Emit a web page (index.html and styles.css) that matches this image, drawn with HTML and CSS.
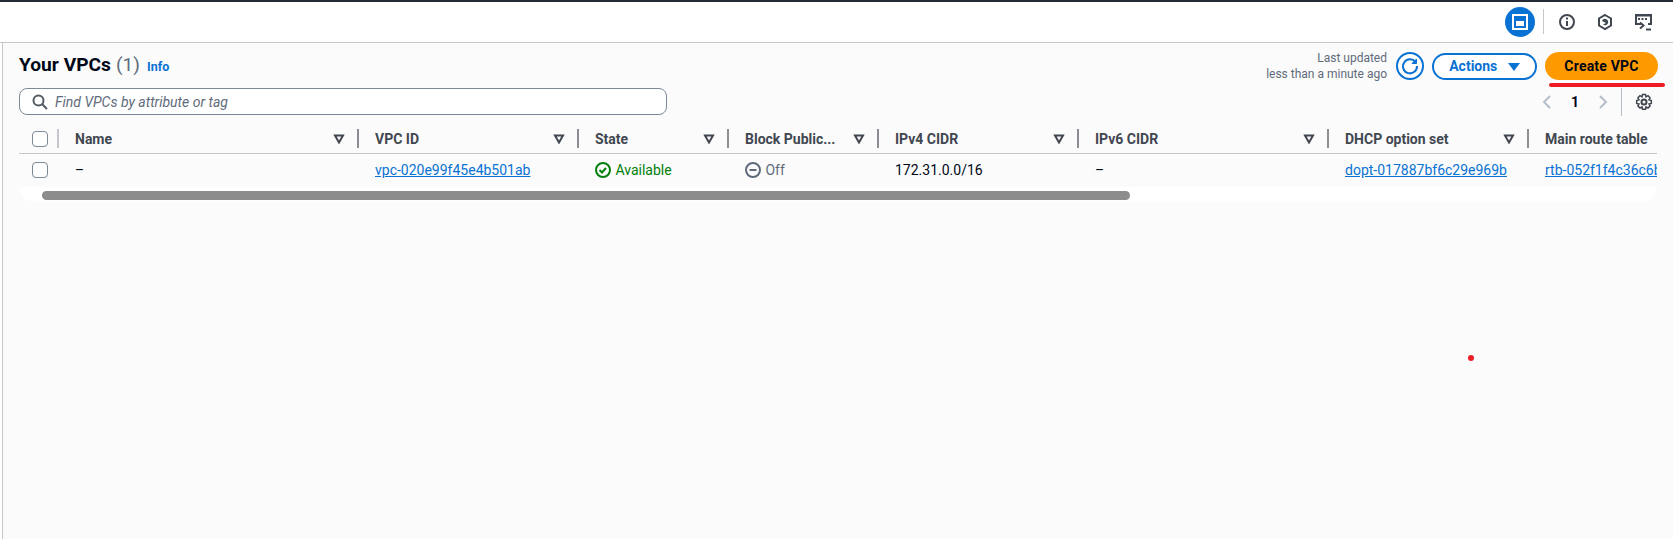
FILE: index.html
```html
<!DOCTYPE html>
<html>
<head>
    <title>Your VPCs</title>
    <link rel="stylesheet" href="styles.css">
</head>
<body>
    <div class="top-nav">
        <div class="nav-active">
            <svg width="18" height="18" viewBox="0 0 18 18" fill="none" stroke="#fff" stroke-width="2"><rect x="2" y="2" width="14" height="14"/><rect x="5" y="8" width="8" height="5" fill="#fff" stroke="none"/></svg>
        </div>
        <div class="nav-sep"></div>
        <svg class="nav-icon" width="18" height="18" viewBox="0 0 18 18" fill="none" stroke="#414750" stroke-width="2"><circle cx="9" cy="9" r="7"/><path d="M9 8v5M9 4.500v2"/></svg>
        <svg class="nav-icon" width="18" height="18" viewBox="0 0 18 18" fill="none" stroke="#414750" stroke-width="2"><path d="M9 2l6 3.500v7L9 16l-6-3.500v-7z"/><path d="M6 8a3.200 3.200 0 1 1 1 3.500l3-1.500z" fill="#414750" stroke="none"/></svg>
        <svg class="nav-icon" width="18" height="18" viewBox="0 0 18 18" fill="none" stroke="#414750" stroke-width="2"><path d="M7 11H2V2h15v9h-3"/><path d="M2 3h15" stroke-width="1"/><path d="M4 6h2M7.500 6h2M11 6h2" stroke-width="2" stroke-dasharray="2 0"/><path d="M6 9.500l3.500 3-3.500 3M12 16.500h5"/></svg>
    </div>

    <div class="main">
        <div class="head-row">
            <div class="title-wrap">
                <span class="title">Your VPCs</span>
                <span class="count">(1)</span>
                <a class="info">Info</a>
            </div>
            <div class="head-actions">
                <div class="updated">Last updated<br>less than a minute ago</div>
                <button class="btn-refresh">
                    <svg width="20" height="20" viewBox="0 0 20 20" fill="none" stroke="#0972d3" stroke-width="2"><path d="M15.500 6A7 7 0 1 0 17 10"/><path d="M16.500 3V7.500H12z" fill="#0972d3" stroke-width="1"/></svg>
                </button>
                <button class="btn-actions">Actions <span class="caret"></span></button>
                <button class="btn-create">Create VPC</button>
            </div>
        </div>

        <div class="search-row">
            <div class="search">
                <svg width="16" height="16" viewBox="0 0 16 16" fill="none" stroke="#545b64" stroke-width="2"><circle cx="6.500" cy="6.500" r="5"/><path d="M10 10l5 5"/></svg>
                <span>Find VPCs by attribute or tag</span>
            </div>
            <div class="pager">
                <svg width="10" height="14" viewBox="0 0 10 14" fill="none" stroke="#b6bec9" stroke-width="2"><path d="M8 1L2 7l6 6"/></svg>
                <span class="page-num">1</span>
                <svg width="10" height="14" viewBox="0 0 10 14" fill="none" stroke="#b6bec9" stroke-width="2"><path d="M2 1l6 6-6 6"/></svg>
                <div class="pager-sep"></div>
                <svg width="18" height="18" viewBox="0 0 18 18" fill="none" stroke="#414750" stroke-width="2"><circle cx="9" cy="9" r="2.500"/><path d="M7.500 1.500h3l.5 2.300 2-1.100 2.100 2.100-1.100 2 2.300.6v3l-2.300.5 1.100 2-2.100 2.100-2-1.100-.5 2.300h-3l-.5-2.300-2 1.100-2.100-2.100 1.100-2-2.300-.5v-3l2.300-.6-1.100-2 2.100-2.100 2 1.100z" stroke-width="1.500"/></svg>
            </div>
        </div>

        <div class="table-wrap">
            <table class="vpc-table">
                <colgroup>
                    <col class="c-check"><col class="c-name"><col class="c-id"><col class="c-state"><col class="c-block"><col class="c-v4"><col class="c-v6"><col class="c-dhcp"><col class="c-route">
                </colgroup>
                <thead>
                    <tr>
                        <th class="check-cell"><span class="checkbox"></span></th>
                        <th><div class="th-in th-first">Name<svg class="filter" width="12" height="10" viewBox="0 0 12 10"><path d="M2 1.500h8L6 8.500z"/></svg></div></th>
                        <th><div class="th-in">VPC ID<svg class="filter" width="12" height="10" viewBox="0 0 12 10"><path d="M2 1.500h8L6 8.500z"/></svg></div></th>
                        <th><div class="th-in">State<svg class="filter" width="12" height="10" viewBox="0 0 12 10"><path d="M2 1.500h8L6 8.500z"/></svg></div></th>
                        <th><div class="th-in">Block Public...<svg class="filter" width="12" height="10" viewBox="0 0 12 10"><path d="M2 1.500h8L6 8.500z"/></svg></div></th>
                        <th><div class="th-in">IPv4 CIDR<svg class="filter" width="12" height="10" viewBox="0 0 12 10"><path d="M2 1.500h8L6 8.500z"/></svg></div></th>
                        <th><div class="th-in">IPv6 CIDR<svg class="filter" width="12" height="10" viewBox="0 0 12 10"><path d="M2 1.500h8L6 8.500z"/></svg></div></th>
                        <th><div class="th-in">DHCP option set<svg class="filter" width="12" height="10" viewBox="0 0 12 10"><path d="M2 1.500h8L6 8.500z"/></svg></div></th>
                        <th><div class="th-in">Main route table</div></th>
                    </tr>
                </thead>
                <tbody>
                    <tr>
                        <td class="check-cell"><span class="checkbox"></span></td>
                        <td>–</td>
                        <td><a class="link">vpc-020e99f45e4b501ab</a></td>
                        <td class="ok">
                            <svg width="16" height="16" viewBox="0 0 16 16" fill="none" stroke="#037f0c" stroke-width="2"><circle cx="8" cy="8" r="7"/><path d="M4.500 8l2.500 2.500 4-4.500"/></svg>
                            Available
                        </td>
                        <td class="off">
                            <svg width="16" height="16" viewBox="0 0 16 16" fill="none" stroke="#5f6b7a" stroke-width="2"><circle cx="8" cy="8" r="7"/><path d="M4.500 8h7"/></svg>
                            Off
                        </td>
                        <td>172.31.0.0/16</td>
                        <td>–</td>
                        <td><a class="link">dopt-017887bf6c29e969b</a></td>
                        <td class="clip-cell"><a class="link">rtb-052f1f4c36c6b</a></td>
                    </tr>
                </tbody>
            </table>
            <div class="scroll-track"><div class="scroll-thumb"></div></div>
        </div>

        <div class="red-line"></div>
        <div class="red-dot"></div>
    </div>
</body>
</html>
```

FILE: styles.css
```css
html, body {
    margin: 0;
    height: 100%;
    overflow: hidden;
}

body {
    background-color: #fff;
    font-family: "Roboto", "Liberation Sans", sans-serif;
    font-size: 14px;
    color: #000716;
    border-top: 2px solid #232b37;
    box-sizing: border-box;
}

/* top bar */
.top-nav {
    height: 41px;
    box-sizing: border-box;
    border-bottom: 1px solid #c6c6cd;
    display: flex;
    align-items: center;
    justify-content: flex-end;
    padding: 0 21px 1px 0;
}

.nav-active {
    width: 30px;
    height: 30px;
    border-radius: 50%;
    background-color: #0972d3;
    display: flex;
    align-items: center;
    justify-content: center;
}

.nav-sep {
    width: 1px;
    height: 25px;
    background-color: #c6c6cd;
    margin: 0 14px 0 8px;
}

.nav-icon {
    margin-right: 20px;
}

.nav-icon:last-child {
    margin-right: 0;
}

/* content */
.main {
    position: relative;
    height: 496px;
    box-sizing: border-box;
    margin-left: 2px;
    border-left: 1px solid #c6c6cd;
    background-color: #fbfbfb;
    padding: 9px 15px 0 16px;
}

.head-row {
    display: flex;
    justify-content: space-between;
    height: 28px;
}

.title-wrap {
    display: flex;
    align-items: baseline;
    padding-top: 1px;
}

.title {
    font-size: 19.200px;
    font-weight: 700;
}

.count {
    font-size: 19.200px;
    color: #5f6b7a;
    margin-left: 5px;
}

.info {
    font-size: 12.500px;
    font-weight: 700;
    color: #0972d3;
    margin-left: 7px;
}

.head-actions {
    display: flex;
    align-items: center;
}

.updated {
    font-size: 12px;
    line-height: 16px;
    color: #5f6b7a;
    text-align: right;
    margin-right: 9px;
}

button {
    font-family: inherit;
    cursor: pointer;
}

.btn-refresh {
    width: 28px;
    height: 28px;
    padding: 0;
    border: 2px solid #0972d3;
    border-radius: 50%;
    background: #fff;
    display: flex;
    align-items: center;
    justify-content: center;
    margin-right: 8px;
}

.btn-actions {
    width: 105px;
    height: 27px;
    padding: 0;
    border: 2px solid #0972d3;
    border-radius: 14px;
    background: #fff;
    color: #0972d3;
    font-size: 14px;
    font-weight: 700;
    margin-right: 8px;
}

.caret {
    display: inline-block;
    width: 0;
    height: 0;
    margin-left: 7px;
    border-left: 6px solid transparent;
    border-right: 6px solid transparent;
    border-top: 8px solid #0972d3;
}

.btn-create {
    width: 113px;
    height: 28px;
    padding: 0;
    border: none;
    border-radius: 14px;
    background-color: #ff9900;
    color: #000716;
    font-size: 14px;
    font-weight: 700;
    letter-spacing: 0.2px;
}

.search-row {
    display: flex;
    justify-content: space-between;
    align-items: flex-start;
    height: 36px;
    margin-top: 8px;
}

.search {
    width: 648px;
    height: 27px;
    box-sizing: border-box;
    border: 1px solid #7d8998;
    border-radius: 8px;
    background-color: #fff;
    display: flex;
    align-items: center;
    padding-left: 12px;
    gap: 7px;
    font-style: italic;
    color: #5f6b7a;
}

.pager {
    display: flex;
    align-items: center;
    height: 28px;
    margin-right: 5px;
}

.page-num {
    font-weight: 700;
    width: 46px;
    text-align: center;
}

.pager-sep {
    width: 1px;
    height: 28px;
    background-color: #b6bec9;
    margin: 0 13px;
}

/* table */
.table-wrap {
    width: 1638px;
    height: 78px;
    overflow: hidden;
    border-radius: 0 0 16px 16px;
    background-color: #fff;
}

.vpc-table {
    border-collapse: collapse;
    table-layout: fixed;
    width: 1700px;
    background-color: #fbfbfb;
}

.c-check { width: 38px; }
.c-name { width: 300px; }
.c-id { width: 220px; }
.c-state { width: 150px; }
.c-block { width: 150px; }
.c-v4 { width: 200px; }
.c-v6 { width: 250px; }
.c-dhcp { width: 200px; }
.c-route { width: 192px; }

th {
    height: 29px;
    padding: 0;
    text-align: left;
    font-weight: 700;
    color: #414750;
    border-bottom: 1px solid #c6c6cd;
}

.th-in {
    display: flex;
    align-items: center;
    justify-content: space-between;
    height: 19px;
    padding: 0 12px 0 16px;
    border-left: 2px solid #8d8d94;
    white-space: nowrap;
}

.th-first {
    border-left-color: #c6c6cd;
}

td {
    height: 33px;
    padding: 0 0 0 18px;
    box-sizing: border-box;
    white-space: nowrap;
    overflow: hidden;
}

.check-cell {
    padding: 0 0 0 13px;
}

th.check-cell {
    padding-left: 13px;
}

.checkbox {
    display: block;
    width: 14px;
    height: 14px;
    border: 1.500px solid #7d8998;
    border-radius: 4px;
    background-color: #fff;
}

.filter {
    flex: none;
    fill: #fbfbfb;
    stroke: #414750;
    stroke-width: 2;
}

.link {
    color: #0972d3;
    text-decoration: underline;
}

.ok {
    color: #037f0c;
}

.off {
    color: #5f6b7a;
}

.ok svg, .off svg {
    vertical-align: -3px;
    margin-right: 1px;
}

/* scroll bar below the table */
.scroll-track {
    padding: 4px 0 0 23px;
}

.scroll-thumb {
    width: 1088px;
    height: 9px;
    border-radius: 5px;
    background-color: #8c8c8c;
}

/* red marks drawn on the screenshot */
.red-line {
    position: absolute;
    left: 1546px;
    top: 40px;
    width: 116px;
    height: 4px;
    border-radius: 2px;
    background-color: #ee1c25;
}

.red-dot {
    position: absolute;
    left: 1465px;
    top: 312px;
    width: 6px;
    height: 6px;
    border-radius: 50%;
    background-color: #ee1c25;
}
```
